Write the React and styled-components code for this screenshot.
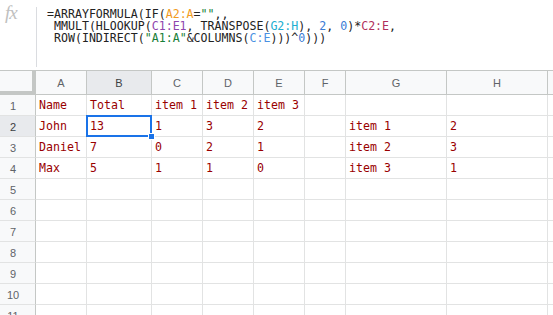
import React from 'react';
import styled, { createGlobalStyle } from 'styled-components';

const GlobalStyle = createGlobalStyle`
  html, body {
    margin: 0;
    padding: 0;
    background: #fff;
    overflow: hidden;
  }
  * {
    box-sizing: border-box;
  }
`;

const COLUMNS = [
  { name: 'A', width: 51 },
  { name: 'B', width: 65 },
  { name: 'C', width: 51 },
  { name: 'D', width: 51 },
  { name: 'E', width: 51 },
  { name: 'F', width: 41 },
  { name: 'G', width: 101 },
  { name: 'H', width: 101 },
  { name: '', width: 20 },
];

const DATA = [
  ['Name', 'Total', 'item 1', 'item 2', 'item 3', '', '', ''],
  ['John', '13', '1', '3', '2', '', 'item 1', '2'],
  ['Daniel', '7', '0', '2', '1', '', 'item 2', '3'],
  ['Max', '5', '1', '1', '0', '', 'item 3', '1'],
];

const ROW_COUNT = 11;
const SELECTED = { row: 2, col: 1 };

const Page = styled.div`
  width: 553px;
  height: 315px;
  overflow: hidden;
  font-family: 'Liberation Sans', Arial, sans-serif;
`;

const FormulaBar = styled.div`
  display: flex;
  height: 71px;
  border-bottom: 1px solid #c4c7c5;
`;

const FxIcon = styled.div`
  width: 36px;
  padding: 2px 0 0 5px;
  font-family: 'Liberation Serif', serif;
  font-style: italic;
  font-size: 19px;
  color: #c0c0c0;
  letter-spacing: -1px;
`;

const Divider = styled.div`
  width: 1px;
  margin: 7px 0 3px;
  background: #dadce0;
`;

const FormulaText = styled.pre`
  margin: 0;
  padding: 8px 0 0 10px;
  font-family: 'DejaVu Sans Mono', 'Liberation Mono', monospace;
  font-size: 11.6px;
  line-height: 12.2px;
  color: #222;
`;

const Ref = styled.span`
  color: ${(p) => p.$color};
`;

const Grid = styled.div`
  display: grid;
  grid-template-columns: 36px ${COLUMNS.map((c) => `${c.width}px`).join(' ')};
  grid-auto-rows: 21px;
  grid-template-rows: 24px;
`;

const Corner = styled.div`
  background: #f8f9fa;
  border-right: 4px solid #c4c7c5;
  border-bottom: 4px solid #c4c7c5;
`;

const ColHead = styled.div`
  display: flex;
  align-items: center;
  justify-content: center;
  background: ${(p) => (p.$active ? '#e8eaed' : '#f8f9fa')};
  border-right: 1px solid #c4c7c5;
  border-bottom: 1px solid #c4c7c5;
  font-size: 11px;
  color: ${(p) => (p.$active ? '#3c4043' : '#5f6368')};
`;

const RowHead = styled.div`
  display: flex;
  align-items: center;
  justify-content: center;
  padding: 1px 9px 0 0;
  background: ${(p) => (p.$active ? '#e8eaed' : '#f8f9fa')};
  border-right: 1px solid #c4c7c5;
  border-bottom: 1px solid #e2e3e3;
  font-size: 11px;
  color: ${(p) => (p.$active ? '#3c4043' : '#5f6368')};
`;

const Cell = styled.div`
  position: relative;
  display: flex;
  align-items: flex-end;
  padding: 0 3px 2px;
  border-right: 1px solid #e2e3e3;
  border-bottom: 1px solid #e2e3e3;
  font-family: 'DejaVu Sans Mono', 'Liberation Mono', monospace;
  font-size: 11.6px;
  line-height: 15px;
  color: #990000;
  white-space: nowrap;
  overflow: visible;
`;

const Selection = styled.div`
  position: absolute;
  left: -1px;
  top: -1px;
  right: -1px;
  bottom: -1px;
  border: 2px solid #1a73e8;
  pointer-events: none;
  z-index: 2;
`;

const Handle = styled.div`
  position: absolute;
  right: -5px;
  bottom: -5px;
  width: 7px;
  height: 7px;
  background: #1a73e8;
  border: 1px solid #fff;
`;

const Formula = () => (
  <FormulaText>
    {'=ARRAYFORMULA(IF('}
    <Ref $color="#f29c1f">A2:A</Ref>
    {'='}
    <Ref $color="#188038">""</Ref>
    {',,\n MMULT(HLOOKUP('}
    <Ref $color="#8e44ad">C1:E1</Ref>
    {', TRANSPOSE('}
    <Ref $color="#21aed1">G2:H</Ref>
    {'), '}
    <Ref $color="#3a7bd5">2</Ref>
    {', '}
    <Ref $color="#3a7bd5">0</Ref>
    {')*'}
    <Ref $color="#b0305c">C2:E</Ref>
    {',\n ROW(INDIRECT('}
    <Ref $color="#188038">"A1:A"</Ref>
    {'&COLUMNS('}
    <Ref $color="#4a90e2">C:E</Ref>
    {')))^'}
    <Ref $color="#3a7bd5">0</Ref>
    {')))'}
  </FormulaText>
);

const App = () => {
  const rows = Array.from({ length: ROW_COUNT }, (_, i) => i + 1);
  return (
    <Page>
      <GlobalStyle />
      <FormulaBar>
        <FxIcon>fx</FxIcon>
        <Divider />
        <Formula />
      </FormulaBar>
      <Grid>
        <Corner />
        {COLUMNS.map((c, ci) => (
          <ColHead key={`h_${ci}`} $active={ci === SELECTED.col}>
            {c.name}
          </ColHead>
        ))}
        {rows.map((r) => (
          <React.Fragment key={`r_${r}`}>
            <RowHead $active={r === SELECTED.row}>{r}</RowHead>
            {COLUMNS.map((c, ci) => {
              const value = DATA[r - 1] ? DATA[r - 1][ci] : '';
              const selected = r === SELECTED.row && ci === SELECTED.col;
              return (
                <Cell key={`c_${r}_${ci}`}>
                  {value}
                  {selected && (
                    <Selection>
                      <Handle />
                    </Selection>
                  )}
                </Cell>
              );
            })}
          </React.Fragment>
        ))}
      </Grid>
    </Page>
  );
};

export default App;
